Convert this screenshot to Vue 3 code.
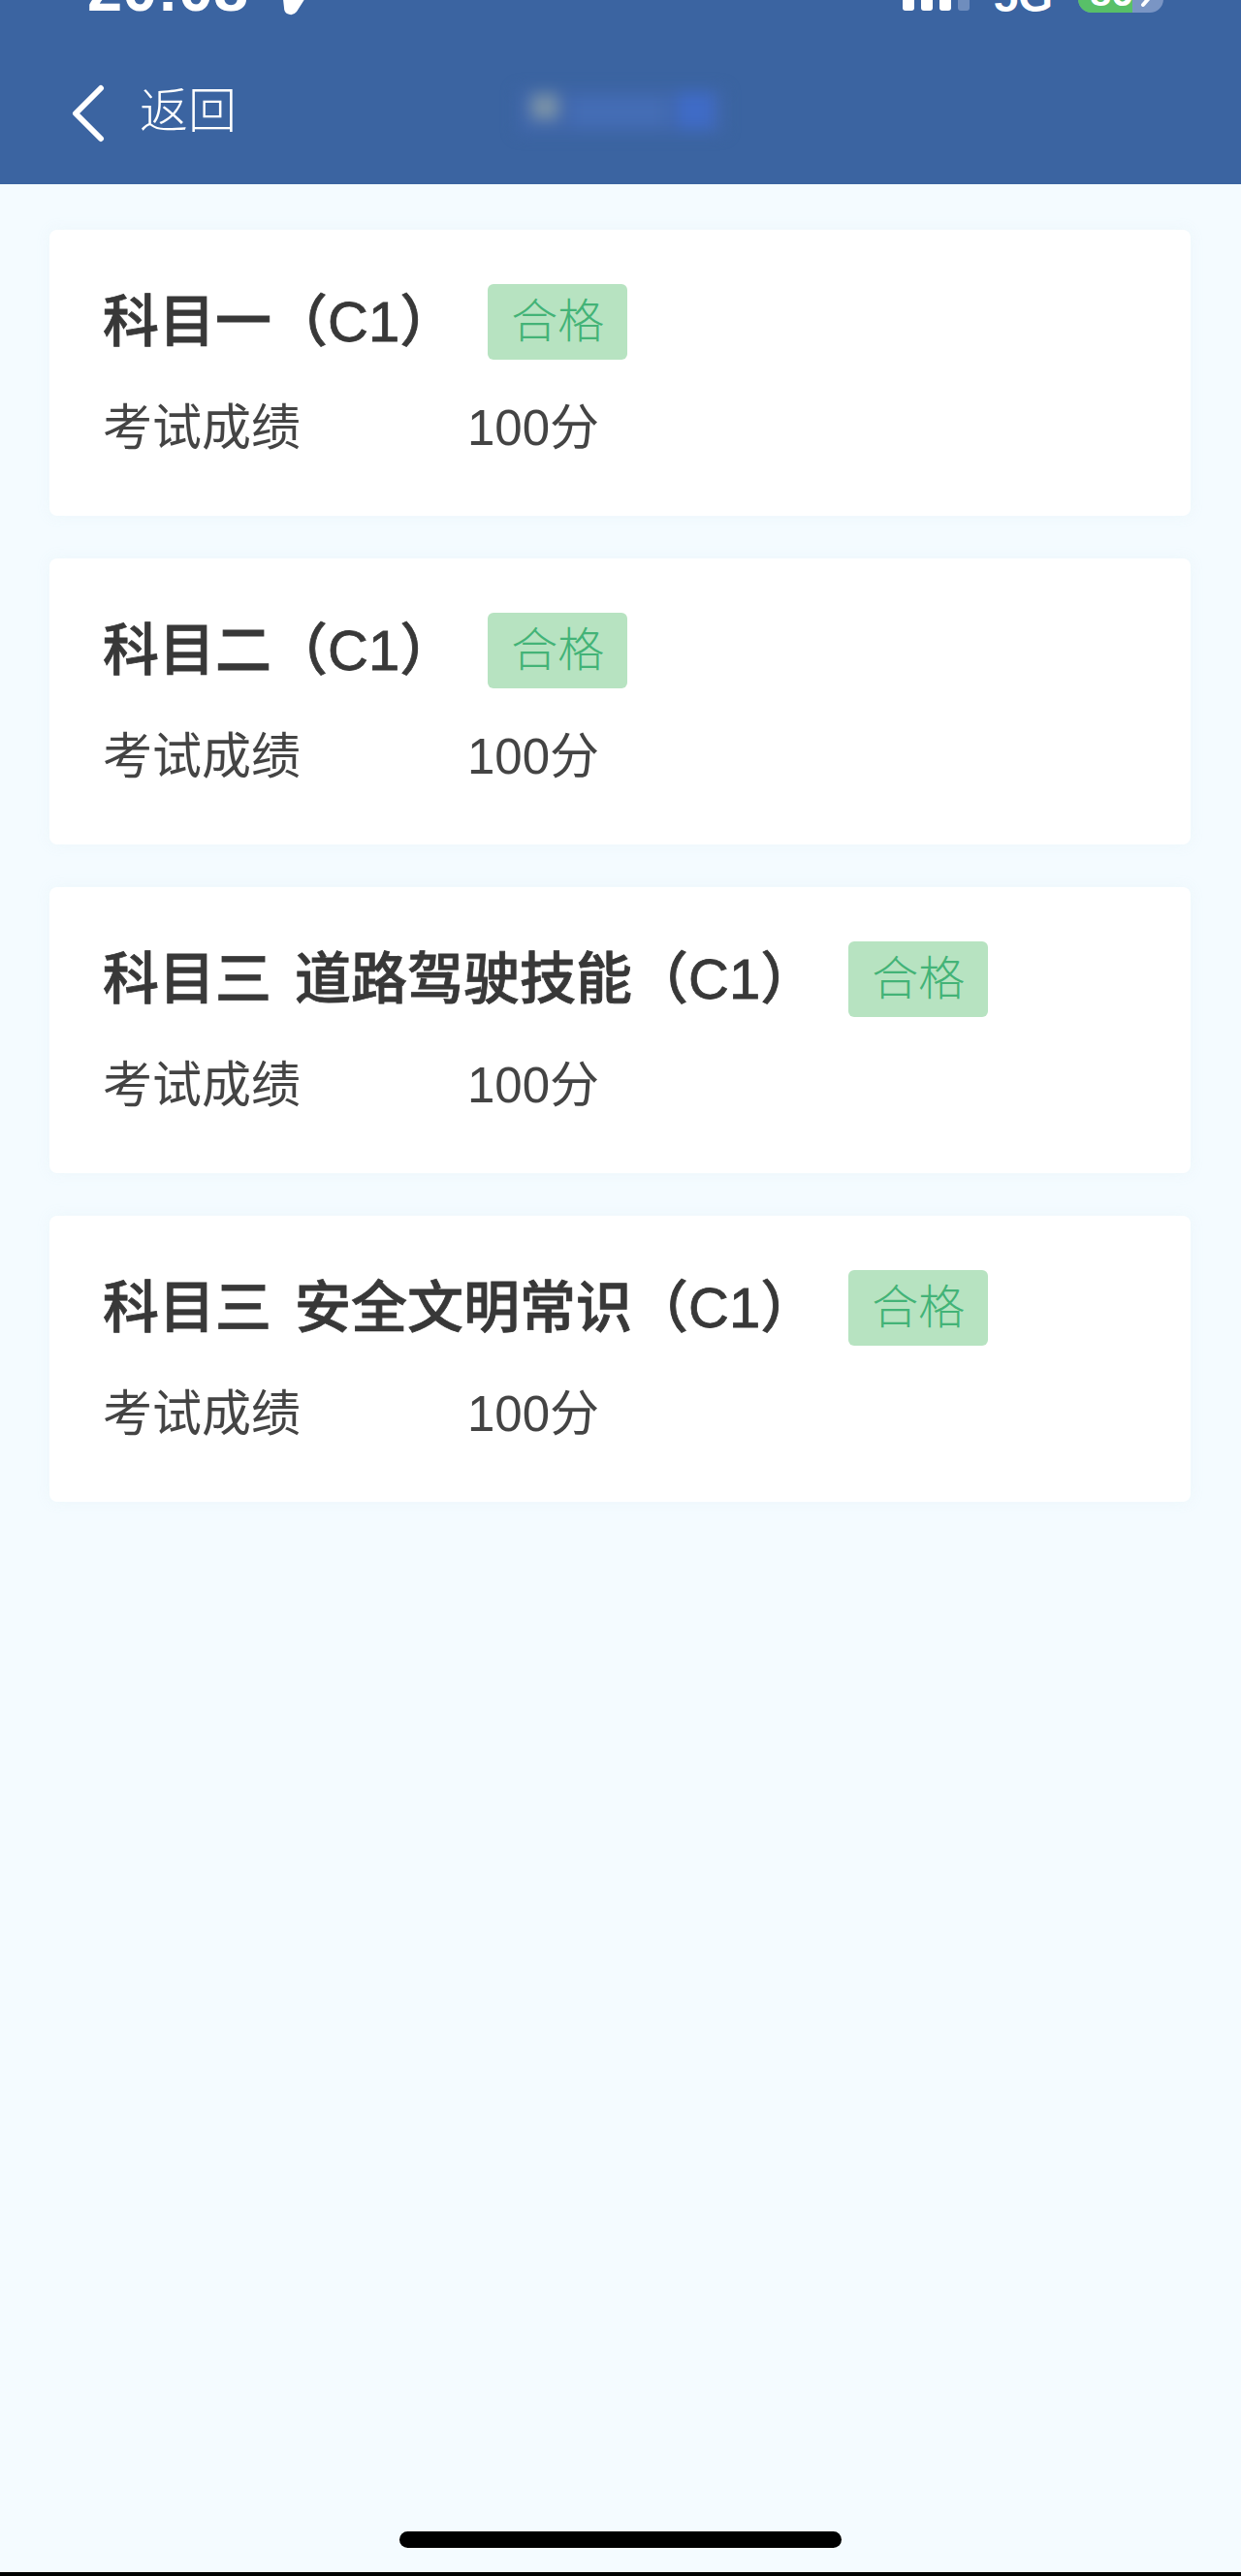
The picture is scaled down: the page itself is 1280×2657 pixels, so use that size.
<template>
  <div class="page">
    <header class="header">
      <div class="status">
        <div class="status-left">
          <span class="time">20:08</span>
          <svg class="arrow" width="34" height="24" viewBox="0 0 34 24">
            <path d="M3 -2 L32 -2 L18 20 Q14 25 8 22 Q5 20 5 16 Z" fill="#fff" />
          </svg>
        </div>
        <div class="status-right">
          <div class="signal">
            <i></i><i></i><i></i><i class="off"></i>
          </div>
          <span class="net">5G</span>
          <div class="battery">
            <div class="battery-fill"></div>
            <span class="battery-num">86</span>
            <svg class="bolt" width="14" height="10" viewBox="0 0 14 10">
              <path d="M10 -2 L3 6" stroke="#fff" stroke-width="4" stroke-linecap="round" />
            </svg>
          </div>
        </div>
      </div>
      <div class="nav">
        <svg class="back" width="36" height="60" viewBox="0 0 36 60">
          <path d="M32 4 L6 30 L32 56" fill="none" stroke="#fff" stroke-width="6" stroke-linecap="round" stroke-linejoin="round" />
        </svg>
        <span class="back-text">返回</span>
        <div class="blur-title">
          <i class="spot light"></i>
          <i class="spot mid"></i>
          <i class="spot bright"></i>
        </div>
      </div>
    </header>

    <main class="list">
      <section v-for="item in subjects" :key="item.name" class="card">
        <div class="title-row">
          <h2 class="title">{{ item.name }}（C1）</h2>
          <span class="tag">合格</span>
        </div>
        <div class="score-row">
          <span class="label">考试成绩</span>
          <span class="value">100分</span>
        </div>
      </section>
    </main>

    <div class="home-bar"></div>
    <div class="bottom-edge"></div>
  </div>
</template>

<script setup>
const subjects = [
  { name: "科目一" },
  { name: "科目二" },
  { name: "科目三 道路驾驶技能" },
  { name: "科目三 安全文明常识" },
];
</script>

<style>
html,
body {
  margin: 0;
  background: #f4fbff;
}
</style>

<style scoped>
.page {
  height: 2657px;
  display: flex;
  flex-direction: column;
  background: #f4fbff;
  font-family: "Liberation Sans", "Noto Sans CJK SC", sans-serif;
  overflow: hidden;
}
.header {
  height: 190px;
  flex-shrink: 0;
  background: #3b64a1;
  color: #fff;
  box-sizing: border-box;
}
.status {
  height: 16px;
  display: flex;
  justify-content: space-between;
  align-items: flex-end;
  overflow: hidden;
  padding: 0 80px 0 90px;
}
.status-left,
.status-right {
  display: flex;
  align-items: flex-end;
}
.time {
  font-weight: 700;
  font-size: 65px;
  line-height: 48px;
  height: 48px;
  margin-bottom: 3px;
}
.arrow {
  margin-left: 32px;
  flex-shrink: 0;
}
.signal {
  display: flex;
  gap: 7px;
  margin-right: 25px;
  margin-bottom: 5px;
}
.signal i {
  width: 12px;
  height: 30px;
  border-radius: 3px;
  background: #fff;
}
.signal i.off {
  background: #6f8dbd;
}
.net {
  font-weight: 700;
  font-size: 46px;
  line-height: 40px;
  height: 40px;
  margin-right: 26px;
}
.battery {
  position: relative;
  width: 88px;
  height: 44px;
  border-radius: 14px;
  margin-bottom: 3px;
  background: #7a95c4;
  overflow: hidden;
}
.battery-fill {
  width: 56px;
  height: 100%;
  background: #58c068;
}
.battery-num {
  position: absolute;
  left: 12px;
  bottom: 1px;
  font-weight: 700;
  font-size: 40px;
  line-height: 40px;
}
.bolt {
  position: absolute;
  left: 64px;
  bottom: 4px;
}
.nav {
  display: flex;
  align-items: center;
  position: relative;
  margin-top: 71px;
  height: 60px;
  padding-left: 72px;
}
.back {
  flex-shrink: 0;
}
.back-text {
  margin-left: 36px;
  margin-bottom: 4px;
  font-size: 50px;
  line-height: 60px;
  font-weight: 300;
}
.blur-title {
  position: absolute;
  left: 534px;
  top: 6px;
  width: 212px;
  height: 44px;
  background: #4067ab;
  filter: blur(8px);
}
.spot {
  position: absolute;
  display: block;
}
.spot.light {
  left: 14px;
  top: 4px;
  width: 28px;
  height: 26px;
  background: #7b93a8;
}
.spot.mid {
  left: 56px;
  top: 8px;
  width: 96px;
  height: 30px;
  background: #446db5;
}
.spot.bright {
  left: 164px;
  top: 2px;
  width: 38px;
  height: 38px;
  background: #3f6bc6;
}
.list {
  display: flex;
  flex-direction: column;
  gap: 44px;
  padding: 47px 52px 0 51px;
}
.card {
  height: 295px;
  box-sizing: border-box;
  padding: 56px 55px 0;
  background: #fff;
  border-radius: 8px;
  box-shadow: 0 0 14px rgba(235, 246, 250, 0.9);
}
.title-row {
  display: flex;
  align-items: center;
  height: 78px;
}
.title {
  margin: -1px 33px 0 0;
  font-size: 58px;
  line-height: 78px;
  font-weight: 500;
  word-spacing: 8px;
  color: #383838;
  -webkit-text-stroke: 0.8px #383838;
  white-space: nowrap;
}
.tag {
  width: 144px;
  height: 78px;
  border-radius: 6px;
  background: #b7e3c1;
  color: #43b377;
  font-size: 48px;
  font-weight: 300;
  line-height: 78px;
  text-align: center;
}
.score-row {
  display: flex;
  align-items: center;
  margin-top: 31px;
  height: 80px;
  font-size: 51px;
  line-height: 80px;
  color: #444;
}
.label {
  width: 376px;
}
.home-bar {
  width: 456px;
  height: 17px;
  margin: auto auto 25px;
  border-radius: 9px;
  background: #000;
  flex-shrink: 0;
}
.bottom-edge {
  height: 4px;
  background: #000;
  flex-shrink: 0;
}
</style>
